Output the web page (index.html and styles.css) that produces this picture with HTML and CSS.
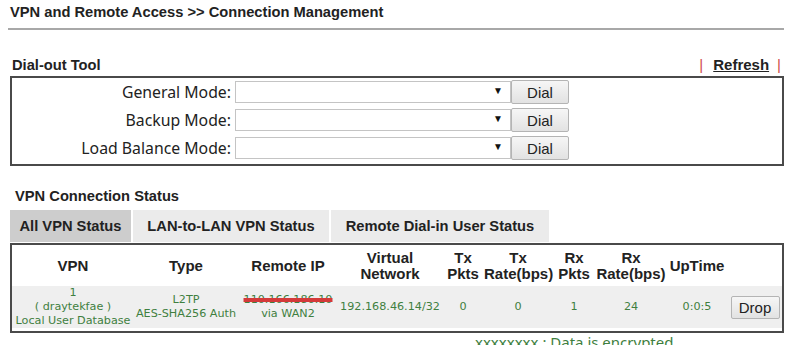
FILE: index.html
```html
<!DOCTYPE html>
<html lang="en">
<head>
  <meta charset="UTF-8">
  <title>VPN and Remote Access &gt;&gt; Connection Management</title>
  <link rel="stylesheet" href="styles.css">
</head>
<body>
  <h1 class="page-title">VPN and Remote Access &gt;&gt; Connection Management</h1>
  <div class="title-rule"></div>

  <div class="section-head dial-head">
    <h2 class="section-title">Dial-out Tool</h2>
    <div class="refresh-bar">
      <span class="pipe">|</span>
      <a href="#" class="refresh-link">Refresh</a>
      <span class="pipe">|</span>
    </div>
  </div>

  <div class="dial-box">
    <div class="dial-row">
      <label class="dial-label">General Mode:</label>
      <div class="select-box"><span class="arrow">&#9660;</span></div>
      <button class="btn">Dial</button>
    </div>
    <div class="dial-row">
      <label class="dial-label">Backup Mode:</label>
      <div class="select-box"><span class="arrow">&#9660;</span></div>
      <button class="btn">Dial</button>
    </div>
    <div class="dial-row">
      <label class="dial-label">Load Balance Mode:</label>
      <div class="select-box"><span class="arrow">&#9660;</span></div>
      <button class="btn">Dial</button>
    </div>
  </div>

  <h2 class="section-title status-title">VPN Connection Status</h2>

  <div class="tabs">
    <div class="tab tab-all active">All VPN Status</div>
    <div class="tab tab-lan">LAN-to-LAN VPN Status</div>
    <div class="tab tab-dial">Remote Dial-in User Status</div>
  </div>

  <div class="status-box">
    <table class="status-table">
      <colgroup>
        <col style="width:122px">
        <col style="width:104px">
        <col style="width:100px">
        <col style="width:104px">
        <col style="width:42px">
        <col style="width:68px">
        <col style="width:44px">
        <col style="width:70px">
        <col style="width:62px">
        <col>
      </colgroup>
      <thead>
        <tr>
          <th>VPN</th>
          <th>Type</th>
          <th>Remote IP</th>
          <th>Virtual<br>Network</th>
          <th>Tx<br>Pkts</th>
          <th>Tx<br>Rate(bps)</th>
          <th>Rx<br>Pkts</th>
          <th>Rx<br>Rate(bps)</th>
          <th>UpTime</th>
          <th></th>
        </tr>
      </thead>
      <tbody>
        <tr>
          <td>1<br>( draytekfae )<br>Local User Database</td>
          <td>L2TP<br>AES-SHA256 Auth</td>
          <td><span class="redacted">110.166.186.10</span><br>via WAN2</td>
          <td>192.168.46.14/32</td>
          <td>0</td>
          <td>0</td>
          <td>1</td>
          <td>24</td>
          <td>0:0:5</td>
          <td><button class="btn drop-btn">Drop</button></td>
        </tr>
      </tbody>
    </table>
  </div>

  <p class="legend">xxxxxxxx : Data is encrypted.</p>
</body>
</html>
```

FILE: styles.css
```css
body {
  margin: 0;
  padding: 0 16px 0 10px;
  background: #fff;
  color: #222;
  font-family: 'Liberation Sans', Arial, sans-serif;
  overflow: hidden;
}

.page-title {
  margin: 0;
  padding-top: 3px;
  font-size: 14.7px;
  font-weight: 700;
  line-height: 18px;
  color: #222;
}

.title-rule {
  margin: 7px 0 0 -2px;
  height: 2px;
  background: #a8a8a8;
}

.section-head {
  display: flex;
  justify-content: space-between;
  align-items: flex-end;
}

.dial-head {
  margin-top: 24px;
  height: 20px;
}

.section-title {
  margin: 0 0 0 2px;
  font-size: 14.7px;
  font-weight: 700;
  line-height: 18px;
  color: #222;
}

.refresh-bar {
  display: flex;
  align-items: center;
  gap: 10px;
  margin-right: 3px;
  font-size: 15px;
  line-height: 18px;
}

.pipe {
  color: #d04a4a;
}

.refresh-link {
  color: #222;
  font-weight: 700;
  text-decoration: underline;
  margin-right: -2px;
}

.dial-box {
  margin-top: 2px;
  border: 2px solid #4a4a4a;
  padding: 0 0 2px;
}

.dial-row {
  display: flex;
  align-items: center;
  height: 28px;
}

.dial-label {
  width: 219px;
  text-align: right;
  font-family: 'Noto Sans', Tahoma, sans-serif;
  font-size: 15.8px;
  color: #222;
  margin-right: 4px;
}

.select-box {
  position: relative;
  width: 274px;
  height: 20px;
  border: 1px solid #c4c4c4;
  background: #fff;
}

.arrow {
  position: absolute;
  right: 7px;
  top: 3px;
  font-size: 10px;
  color: #111;
}

.btn {
  font-family: 'Liberation Sans', Arial, sans-serif;
  font-size: 15px;
  color: #222;
  background: linear-gradient(#f6f6f6, #e2e2e2);
  border: 1px solid #b4b4b4;
  border-radius: 2px;
  padding: 0;
  width: 58px;
  height: 24px;
}

.status-title {
  margin-top: 21px;
  margin-left: 5px;
}

.tabs {
  display: flex;
  gap: 2px;
  margin-top: 5px;
  height: 32px;
}

.tab {
  display: flex;
  align-items: center;
  justify-content: center;
  background: #ebebeb;
  font-size: 14.7px;
  font-weight: 700;
  color: #222;
  white-space: nowrap;
}

.tab.active {
  background: #cdcdcd;
}

.tab-all {
  width: 121px;
}

.tab-lan {
  width: 196px;
}

.tab-dial {
  width: 218px;
}

.status-box {
  margin-top: 1px;
  border: 2px solid #4a4a4a;
  padding: 0 0 3px;
}

.status-table {
  width: 100%;
  table-layout: fixed;
  border-collapse: collapse;
}

.status-table th {
  height: 41px;
  padding: 0;
  font-size: 15px;
  font-weight: 700;
  line-height: 16px;
  color: #222;
  text-align: center;
  vertical-align: middle;
  white-space: nowrap;
}

.status-table td {
  height: 42px;
  padding: 0;
  background: #efefef;
  font-family: 'DejaVu Sans', Tahoma, sans-serif;
  font-size: 11.2px;
  line-height: 14px;
  color: #3f7f3f;
  text-align: center;
  white-space: nowrap;
}

.redacted {
  text-decoration: line-through;
  text-decoration-color: #d43a3a;
  text-decoration-thickness: 4px;
}

.drop-btn {
  width: 49px;
  height: 23px;
  font-size: 15px;
}

.legend {
  margin: 0 0 0 465px;
  font-family: 'Noto Sans', Tahoma, sans-serif;
  font-size: 15px;
  line-height: 18px;
  color: #3f7f3f;
}
```
